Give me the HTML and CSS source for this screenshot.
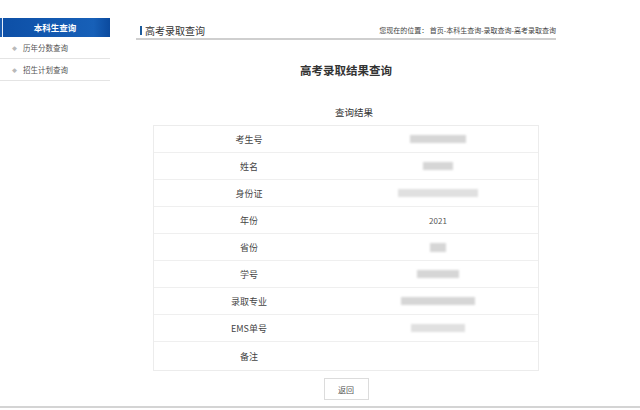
FILE: index.html
```html
<!DOCTYPE html>
<html lang="zh">
<head>
<meta charset="utf-8">
<title>高考录取查询</title>
<link rel="stylesheet" href="styles.css">
</head>
<body>
<div class="page">
  <aside class="sidebar">
    <div class="side-head">本科生查询</div>
    <div class="side-item"><span class="dot">◆</span>历年分数查询</div>
    <div class="side-item"><span class="dot">◆</span>招生计划查询</div>
  </aside>
  <main class="main">
    <div class="main-head">
      <div class="main-title">高考录取查询</div>
      <div class="crumb">您现在的位置：&nbsp;首页-本科生查询-录取查询-高考录取查询</div>
    </div>
    <h1 class="title">高考录取结果查询</h1>
    <div class="subtitle">查询结果</div>
    <div class="result">
      <div class="row"><div class="label">考生号</div><div class="value"><span class="blur" style="width:56px"></span></div></div>
      <div class="row"><div class="label">姓名</div><div class="value"><span class="blur" style="width:30px"></span></div></div>
      <div class="row"><div class="label">身份证</div><div class="value"><span class="blur light" style="width:80px"></span></div></div>
      <div class="row"><div class="label">年份</div><div class="value text">2021</div></div>
      <div class="row"><div class="label">省份</div><div class="value"><span class="blur" style="width:16px;height:9px"></span></div></div>
      <div class="row"><div class="label">学号</div><div class="value"><span class="blur" style="width:42px"></span></div></div>
      <div class="row"><div class="label">录取专业</div><div class="value"><span class="blur" style="width:74px"></span></div></div>
      <div class="row"><div class="label">EMS单号</div><div class="value"><span class="blur light" style="width:54px"></span></div></div>
      <div class="row last"><div class="label">备注</div><div class="value"></div></div>
    </div>
    <div class="actions"><button class="btn">返回</button></div>
  </main>
</div>
</body>
</html>
```

FILE: styles.css
```css
html, body {
  margin: 0;
  padding: 0;
  background: #fff;
}
body {
  font-family: "Noto Sans CJK SC", "Noto Sans", sans-serif;
  color: #333;
}
.page {
  display: flex;
  height: 406px;
  border-bottom: 2px solid #d4d4d4;
  overflow: hidden;
}
.sidebar {
  width: 110px;
  padding-top: 18px;
  flex: none;
}
.side-head {
  height: 19px;
  line-height: 19px;
  text-align: center;
  color: #fff;
  font-size: 8.5px;
  font-weight: bold;
  background:
    linear-gradient(to right, #1a5cb0 0 2px, #e8eef8 2px 3px, transparent 3px),
    linear-gradient(to right, #0d4fa6, #1760b8 85%, #0b4a9e);
}
.side-item {
  height: 21px;
  line-height: 22px;
  border-bottom: 1px solid #e4e4e4;
  padding-left: 12px;
  font-size: 7.5px;
  color: #555;
  display: flex;
  align-items: center;
}
.dot {
  color: #b9b9b9;
  font-size: 5px;
  margin-right: 6px;
}
.main {
  margin-left: 26px;
  width: 420px;
  flex: none;
}
.main-head {
  display: flex;
  justify-content: space-between;
  align-items: center;
  padding-top: 23px;
  height: 14px;
  padding-bottom: 1px;
  border-bottom: 2px solid #cfcfcf;
}
.main-title {
  margin-left: 4px;
  padding-left: 3px;
  border-left: 2px solid #1c5b9c;
  line-height: 9px;
  font-size: 10px;
  color: #333;
}
.crumb {
  font-size: 7px;
  color: #444;
}
.title {
  margin: 22px 0 0;
  text-align: center;
  font-size: 11.5px;
  line-height: 16px;
  font-weight: bold;
  color: #333;
}
.subtitle {
  margin-top: 27px;
  text-align: center;
  font-size: 9.5px;
  line-height: 14px;
  color: #333;
  padding-left: 16px;
}
.result {
  margin: 6px auto 0;
  width: 384px;
  border: 1px solid #ececec;
}
.row {
  display: flex;
  height: 27px;
  border-bottom: 1px solid #efefef;
  box-sizing: border-box;
}
.row.last {
  height: 28px;
  border-bottom: none;
}
.label {
  width: 190px;
  display: flex;
  align-items: center;
  justify-content: center;
  font-size: 9px;
  color: #444;
}
.value {
  flex: 1;
  display: flex;
  align-items: center;
  justify-content: center;
}
.value.text {
  font-size: 8px;
  color: #555;
  padding-right: 6px;
}
.blur {
  display: inline-block;
  height: 8px;
  background: #d6d6d6;
  filter: blur(1.2px);
  margin-right: 6px;
}
.blur.light {
  background: #e0e0e0;
}
.actions {
  display: flex;
  justify-content: center;
  margin-top: 7px;
}
.btn {
  width: 45px;
  height: 22px;
  border: 1px solid #dcdcdc;
  background: #fff;
  font-family: inherit;
  font-size: 8px;
  color: #555;
  padding: 0;
}
```
